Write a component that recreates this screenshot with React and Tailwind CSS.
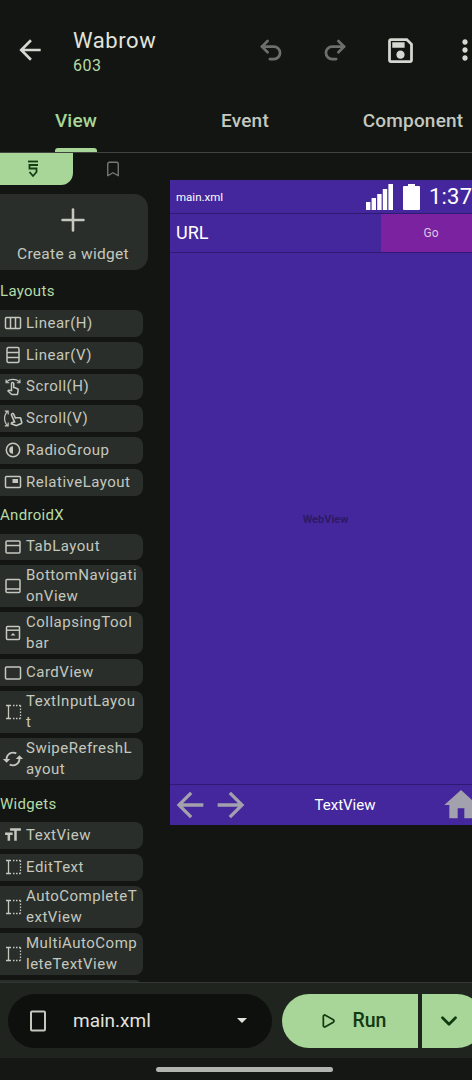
import { Undo2, Redo2, Bookmark, Plus, ChevronDown, Play } from "lucide-react";
import { MdOutlineSwipe, MdOutlineSwipeVertical } from "react-icons/md";

// small material style icons used in the palette
const Svg = ({ d, size = 20, className = "" }) => (
  <svg width={size} height={size} viewBox="0 0 24 24" fill="currentColor" className={className}>
    <path d={d} />
  </svg>
);

const IconColumns = () => (
  <svg width="18" height="18" viewBox="0 0 18 18" fill="none" stroke="currentColor" strokeWidth="1.5">
    <rect x="1.5" y="3.5" width="15" height="11" rx="1" />
    <path d="M6.5 3.5v11M11.5 3.5v11" />
  </svg>
);
const IconRows = () => (
  <svg width="18" height="18" viewBox="0 0 18 18" fill="none" stroke="currentColor" strokeWidth="1.5">
    <rect x="3" y="1.500" width="12" height="15" rx="1.500" />
    <path d="M3 6.500h12M3 11.500h12" />
  </svg>
);
const IconRadio = () => (
  <svg width="18" height="18" viewBox="0 0 18 18" fill="none">
    <circle cx="9" cy="9" r="6.700" stroke="currentColor" strokeWidth="1.500" />
    <path d="M9 5.200a3.800 3.800 0 0 0 0 7.600z" fill="currentColor" />
  </svg>
);
const IconRelative = () => (
  <svg width="18" height="18" viewBox="0 0 18 18" fill="none">
    <rect x="1.500" y="3.500" width="15" height="11" rx="1" stroke="currentColor" strokeWidth="1.500" />
    <rect x="8.500" y="6" width="5.500" height="4" fill="currentColor" />
  </svg>
);
const IconTab = () => (
  <svg width="18" height="18" viewBox="0 0 18 18" fill="none" stroke="currentColor" strokeWidth="1.500">
    <rect x="2" y="3" width="14" height="12" rx="1" />
    <path d="M2 7.500h14" />
  </svg>
);
const IconBottomNav = () => (
  <svg width="18" height="18" viewBox="0 0 18 18" fill="none" stroke="currentColor" strokeWidth="1.500">
    <rect x="2" y="2.500" width="14" height="13" rx="1" />
    <path d="M2 12h14" />
  </svg>
);
const IconCollapsing = () => (
  <svg width="18" height="18" viewBox="0 0 18 18" fill="none">
    <rect x="2.500" y="2.500" width="13" height="13" rx="1" stroke="currentColor" strokeWidth="1.500" />
    <path d="M2.500 6.200h13" stroke="currentColor" strokeWidth="1.500" />
    <path d="M6.500 11.500L9 9l2.500 2.500z" fill="currentColor" />
  </svg>
);
const IconCard = () => (
  <svg width="18" height="18" viewBox="0 0 18 18" fill="none" stroke="currentColor" strokeWidth="1.500">
    <rect x="1.500" y="3" width="15" height="12" rx="1" />
  </svg>
);
const IconInput = () => (
  <svg width="18" height="18" viewBox="0 0 18 18" fill="none" stroke="currentColor" strokeWidth="1.300">
    <path d="M2 2.500h5M2 15.500h5M4.500 2.500v13" />
    <path d="M9 2.500h8M9 15.500h8M16.500 2.500v13" strokeDasharray="1.500 1.500" />
  </svg>
);

const layouts = [
  { name: "Linear(H)", icon: <IconColumns /> },
  { name: "Linear(V)", icon: <IconRows /> },
  { name: "Scroll(H)", icon: <MdOutlineSwipe size={18} /> },
  { name: "Scroll(V)", icon: <MdOutlineSwipeVertical size={19} /> },
  { name: "RadioGroup", icon: <IconRadio /> },
  { name: "RelativeLayout", icon: <IconRelative /> },
];
const androidx = [
  { name: "TabLayout", icon: <IconTab /> },
  { name: "BottomNavigationView", icon: <IconBottomNav /> },
  { name: "CollapsingToolbar", icon: <IconCollapsing /> },
  { name: "CardView", icon: <IconCard /> },
  { name: "TextInputLayout", icon: <IconInput /> },
  {
    name: "SwipeRefreshLayout",
    icon: (
      <Svg
        size={22}
        d="M12 4V1L8 5l4 4V6c3.310 0 6 2.690 6 6 0 1.010-.25 1.970-.7 2.800l1.460 1.460C19.540 15.030 20 13.570 20 12c0-4.420-3.580-8-8-8zm0 14c-3.310 0-6-2.690-6-6 0-1.010.25-1.970.7-2.800L5.240 7.740C4.460 8.970 4 10.430 4 12c0 4.420 3.580 8 8 8v3l4-4-4-4v3z"
        className="rotate-90"
      />
    ),
  },
];
const widgets = [
  {
    name: "TextView",
    icon: <Svg size={20} d="M2.500 4v3h5v12h3V7h5V4h-13zm19 5h-9v3h3v7h3v-7h3V9z" className="-scale-x-100" />,
  },
  { name: "EditText", icon: <IconInput /> },
  { name: "AutoCompleteTextView", icon: <IconInput /> },
  { name: "MultiAutoCompleteTextView", icon: <IconInput /> },
  { name: "", icon: null },
];

function PaletteItem({ name, icon }) {
  return (
    <div className="flex min-h-[26.75px] w-[143px] shrink-0 items-center rounded-r-lg bg-[#2a2e2a] text-[#c4c8bf]">
      <div className="flex w-[26px] shrink-0 items-center justify-center">{icon}</div>
      <div className="w-[113px] break-all text-[15px] leading-[21px] tracking-[0.5px]">{name}</div>
    </div>
  );
}

function Section({ title, items, labelClass }) {
  return (
    <div>
      <div className={`flex items-center text-[15px] leading-5 tracking-[0.3px] text-[#b5dba6] ${labelClass}`}>{title}</div>
      <div className="flex flex-col gap-[5px]">
        {items.map((item) => (
          <PaletteItem key={item.name} name={item.name} icon={item.icon} />
        ))}
      </div>
    </div>
  );
}

export default function App() {
  return (
    <div
      className="flex h-[1080px] w-[472px] flex-col overflow-hidden bg-[#121512] text-[#e2e3dd]"
      style={{ fontFamily: "Roboto, sans-serif" }}
    >
      {/* toolbar */}
      <div className="flex h-[100px] shrink-0 items-center pl-[14px]">
        <Svg size={32} d="M20 11H7.830l5.590-5.590L12 4l-8 8 8 8 1.410-1.410L7.830 13H20v-2z" className="shrink-0 text-[#d5d8d0]" />
        <div className="ml-[27px] w-[182px] shrink-0 pt-[3px]">
          <div className="text-[22px] leading-[26px] tracking-[0.6px]">Wabrow</div>
          <div className="mt-[2px] text-[16px] leading-5 tracking-[0.5px] text-[#b5dba6]">603</div>
        </div>
        <div className="flex shrink-0 items-center gap-[32px]">
          <Undo2 size={32} strokeWidth={2.400} className="shrink-0 scale-[0.85] text-[#6c706a]" />
          <Redo2 size={32} strokeWidth={2.400} className="shrink-0 scale-[0.85] text-[#6c706a]" />
          <Svg
            size={33}
            d="M17 3H5c-1.110 0-2 .9-2 2v14c0 1.100.89 2 2 2h14c1.100 0 2-.9 2-2V7l-4-4zm2 16H5V5h11.170L19 7.830V19zm-7-7c-1.660 0-3 1.340-3 3s1.340 3 3 3 3-1.340 3-3-1.340-3-3-3zM6 6h9v4H6z"
            className="ml-[1px] shrink-0 text-[#d5d8d0]"
          />
          <Svg
            size={32}
            d="M12 8c1.100 0 2-.9 2-2s-.9-2-2-2-2 .9-2 2 .9 2 2 2zm0 2c-1.100 0-2 .9-2 2s.9 2 2 2 2-.9 2-2-.9-2-2-2zm0 6c-1.100 0-2 .9-2 2s.9 2 2 2 2-.9 2-2-.9-2-2-2z"
            className="shrink-0 text-[#d5d8d0]"
          />
        </div>
      </div>

      {/* tabs */}
      <div className="flex h-[53px] shrink-0 border-b border-[#3f433e] text-[19px] font-medium tracking-[0.2px]">
        <div className="flex w-[152px] shrink-0 flex-col items-center justify-between text-[#a8d598]">
          <div className="pt-[10px] leading-[22px]">View</div>
          <div className="h-[4px] w-[42px] rounded-t-[3px] bg-[#a8d598]" />
        </div>
        <div className="w-[186px] shrink-0 pt-[10px] text-center leading-[22px] text-[#c4c8bf]">Event</div>
        <div className="w-[150px] shrink-0 pt-[10px] text-center leading-[22px] text-[#c4c8bf]">Component</div>
      </div>

      {/* editor area */}
      <div className="flex min-h-0 flex-1 overflow-hidden">
        <div className="w-[170px] shrink-0">
          <div className="flex h-[32px]">
            <div className="flex w-[73px] items-center justify-center rounded-br-[12px] bg-[#a8d598] pr-[7px] text-[#143c12]">
              <svg width="14" height="19" viewBox="0 0 14 19" fill="none" stroke="currentColor" strokeWidth="1.800">
                <path d="M2 1.500h10" />
                <path d="M12 5H3.500v3.500h7V12L7 16 3.500 12" />
              </svg>
            </div>
            <div className="flex w-[80px] items-center justify-center text-[#777b75]">
              <Bookmark size={18} strokeWidth={1.800} />
            </div>
          </div>

          <div className="mt-[9px] flex h-[76px] w-[148px] flex-col items-center rounded-r-[14px] bg-[#2a2e2a] pr-[2px] text-[#c4c8bf]">
            <Plus size={36} strokeWidth={1.700} className="mt-[8px]" />
            <div className="mt-[6px] text-[15.500px] leading-5 tracking-[0.3px]">Create a widget</div>
          </div>

          <Section title="Layouts" items={layouts} labelClass="h-[40px] pt-[1px]" />
          <Section title="AndroidX" items={androidx} labelClass="h-[38px]" />
          <Section title="Widgets" items={widgets} labelClass="h-[42px] pt-[5px]" />
        </div>

        {/* preview */}
        <div className="mt-[27px] flex h-[645px] w-[311px] shrink-0 flex-col bg-[#45279d] text-white">
          <div className="flex h-[34px] shrink-0 items-center border-b border-[#2e1a70] pl-[6px]">
            <div className="w-[190px] shrink-0 text-[11.500px] leading-4">main.xml</div>
            <svg width="27" height="26" viewBox="0 0 27 26" fill="#fff" className="shrink-0">
              <rect x="0" y="18" width="4.400" height="8" />
              <rect x="5.600" y="14" width="4.400" height="12" />
              <rect x="11.200" y="10" width="4.400" height="16" />
              <rect x="16.800" y="5" width="4.400" height="21" />
              <rect x="22.400" y="0" width="4.600" height="26" />
            </svg>
            <svg width="17" height="26" viewBox="0 0 17 26" fill="#fff" className="ml-[10px] shrink-0">
              <path d="M5 0h7v2h4a1 1 0 0 1 1 1v22a1 1 0 0 1-1 1H1a1 1 0 0 1-1-1V3a1 1 0 0 1 1-1h4z" />
            </svg>
            <div className="ml-[9px] shrink-0 text-[22px] leading-6 tracking-[0.2px]">1:37</div>
          </div>
          <div className="flex h-[39px] shrink-0 border-b border-[#2e1a70]">
            <div className="flex-1 pl-[6px] text-[18px] leading-[37px]">URL</div>
            <div className="flex w-[100px] items-center justify-center bg-[#7b22a0] text-[12px] text-[#d9c8e4]">Go</div>
          </div>
          <div className="flex flex-1 items-center justify-center pt-[4px] text-[11px] font-bold text-[#2c1a66]">WebView</div>
          <div className="flex h-[41px] shrink-0 items-center border-t border-[#2e1a70]">
            <Svg size={40} d="M20 11H7.830l5.590-5.590L12 4l-8 8 8 8 1.410-1.410L7.830 13H20v-2z" className="shrink-0 text-[#a3a1ad]" />
            <Svg size={40} d="M12 4l-1.410 1.410L16.170 11H4v2h12.170l-5.580 5.590L12 20l8-8z" className="ml-[1px] shrink-0 text-[#a3a1ad]" />
            <div className="flex-1 pr-[2px] text-center text-[15px]">TextView</div>
            <Svg size={40} d="M10 20v-6h4v6h5v-8h3L12 3 2 12h3v8z" className="shrink-0 text-[#a3a1ad]" />
          </div>
        </div>
      </div>

      {/* bottom bar */}
      <div className="flex h-[76px] shrink-0 items-center gap-[10px] border-t border-[#343833] bg-[#1f241f] pl-[8px]">
        <div className="flex h-[54px] w-[264px] shrink-0 items-center rounded-full bg-[#0d100d] text-[#e2e3dd]">
          <svg width="18" height="22" viewBox="0 0 18 22" fill="none" stroke="#c4c8bf" strokeWidth="2" className="ml-[21px] shrink-0">
            <rect x="2" y="1.500" width="14" height="19" rx="1" />
          </svg>
          <div className="ml-[26px] flex-1 text-[19px] leading-6">main.xml</div>
          <div className="mr-[25px] h-0 w-0 border-x-[5px] border-t-[5px] border-x-transparent border-t-[#e2e3dd]" />
        </div>
        <div className="flex shrink-0 gap-[4px]">
          <div className="flex h-[54px] w-[136px] items-center justify-center rounded-l-full rounded-r-[4px] bg-[#a8d598] pl-[6px] text-[#123a10]">
            <Play size={16} strokeWidth={2.600} className="mr-[17px]" />
            <span className="text-[19.500px] font-medium">Run</span>
          </div>
          <div className="flex h-[54px] w-[62px] items-center rounded-l-[4px] rounded-r-full bg-[#a8d598] pl-[14px] text-[#123a10]">
            <ChevronDown size={26} strokeWidth={2.500} />
          </div>
        </div>
      </div>

      {/* gesture bar */}
      <div className="flex h-[22px] shrink-0 items-center justify-center bg-[#141714] pl-[17px]">
        <div className="h-[5px] w-[177px] rounded-full bg-[#b2b4af]" />
      </div>
    </div>
  );
}
